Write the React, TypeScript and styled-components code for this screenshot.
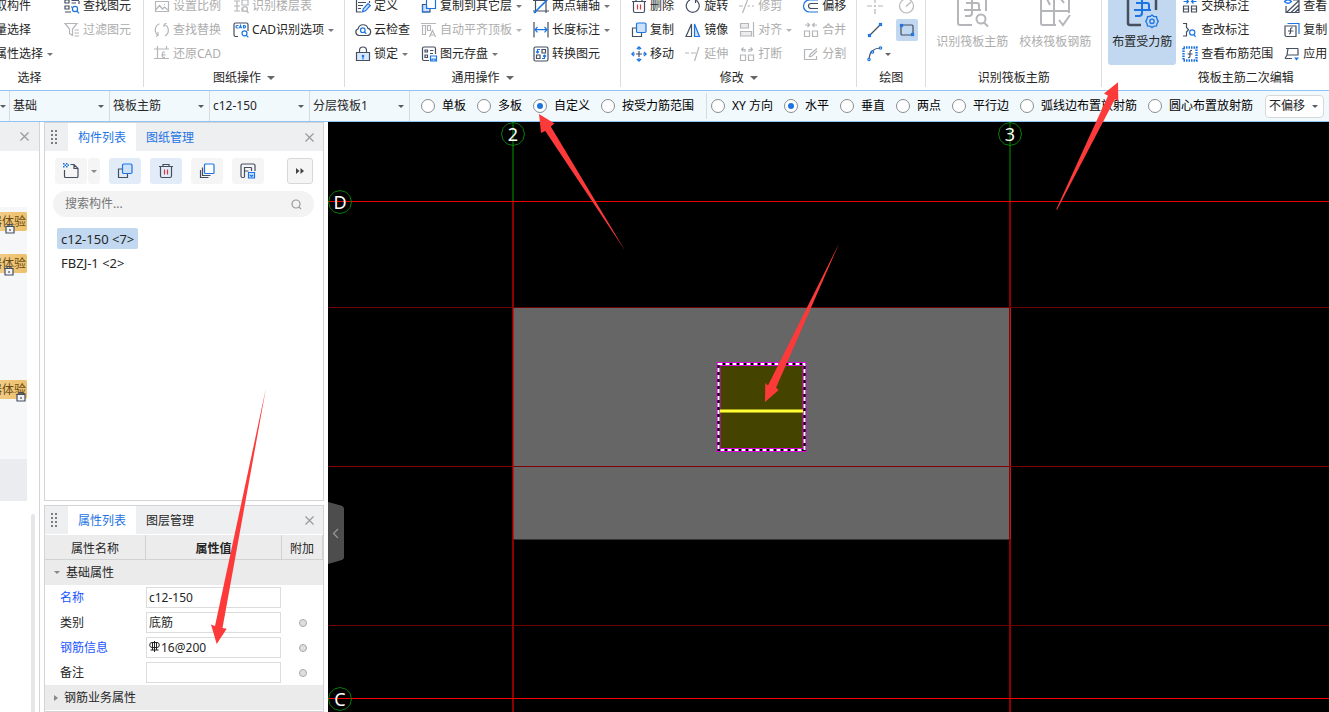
import React from "react";
import styled, { createGlobalStyle, css } from "styled-components";

const INK = "#454f60";
const BLUE = "#1c74e4";
const MUTED = "#b4b6ba";
const RED = "#d9363e";

const GlobalStyle = createGlobalStyle`
  *, *::before, *::after { box-sizing: border-box; }
  html, body, #root { height: 100%; margin: 0; }
  body, button, input, select {
    font-family: "Noto Sans", "Noto Sans CJK SC", sans-serif;
    font-size: 12px;
    line-height: 16px;
    color: #262626;
  }
  button, input, select { margin: 0; padding: 0; border: 0; background: none; }
`;

/* ---------- icons ---------- */

const Svg = styled.svg`
  flex: none;
  display: block;
  fill: none;
  stroke-width: 1.2;
  overflow: visible;
`;

const icons: Record<string, React.ReactNode> = {
  findElement: (
    <>
      <path stroke={INK} d="M1 2h4v3H1zM7.500 2.500H15M7.500 5H12M1 8h4v3H1zM7 9h1M15 6V3M1 14h6" />
      <g stroke={BLUE}><circle cx="11" cy="11" r="2.600" /><path d="M13 13l2 2.300" /></g>
    </>
  ),
  filter: <path stroke={MUTED} d="M1 1.500h12L8.500 7v6.500l-3-2V7zM10.500 8H15M10.500 11H15M10.500 14H15" />,
  scale: (
    <path stroke={MUTED} d="M1.500 3.500h13v10h-13zM2 11.500l3.500-4 3 3.500 2-2 3.500 3M10 6.500h1" />
  ),
  floorTable: (
    <>
      <path stroke={MUTED} d="M1 3h6M4 3v10M1 8h6M1 13h6M9 2h6v5H9zM9 14V9.500" />
      <circle stroke={MUTED} cx="12" cy="11" r="2.400" /><path stroke={MUTED} d="M13.800 13l1.700 2" />
    </>
  ),
  replace: (
    <path stroke={MUTED} d="M5.500 1.800A6.500 6.500 0 0 0 4 13.200L2 14.500M4 13.200V10M10 2.200A6.500 6.500 0 0 1 11 14M10 2.200l2.500-1M10 2.200V5" />
  ),
  cadOptions: (
    <>
      <path stroke={INK} d="M5 14.500H2.500a1.500 1.500 0 0 1-1.500-1.500V2.500A1.500 1.500 0 0 1 2.500 1h11A1.500 1.500 0 0 1 15 2.500V9" />
      <path stroke={BLUE} d="M5.500 3.500H4q-1 0-1 1.200T4 6h1.500M6.500 6.200l1-2.700 1 2.700M10.500 3.500V6h.8q1.200 0 1.200-1.200t-1.200-1.300z" />
      <circle stroke={BLUE} cx="11.500" cy="11.300" r="2.500" /><path stroke={BLUE} d="M13.300 13.200l2 2.200" />
    </>
  ),
  restoreCad: (
    <path stroke={MUTED} d="M0 3h15M3.500 0v12.500H15M12.500 0v3M11 6H9L8 9l1 2.500h2M7.500 8.800h4M0 12.500h3.500" />
  ),
  define: (
    <>
      <path stroke={INK} d="M1.500 1.500h11M3 4.500h8M3 7.500h5M3 10.500h3M1.500 1.500v12.500h5M14.500 3V5" />
      <path stroke={BLUE} fill="#cfe2fb" d="M7.500 13.800l.8-3L13 5.500l2.300 2-4.800 5.300z" />
    </>
  ),
  cloudCheck: (
    <>
      <path stroke={INK} d="M4 13.500a3.500 3.500 0 0 1-.8-6.800 5 5 0 0 1 9.700-.3A3.600 3.600 0 0 1 12 13.500z" />
      <g stroke={BLUE}><circle cx="7.800" cy="8.200" r="2.300" /><path d="M9.500 10l1.800 1.800" /></g>
    </>
  ),
  lock: (
    <>
      <path stroke={INK} d="M4.500 6V4.500a3.500 3.500 0 0 1 7 0V6" />
      <path stroke={INK} fill="#d9e8fc" d="M1.500 6.500h13v8h-13z" />
      <path stroke={BLUE} d="M8 10.500v3" /><circle fill={BLUE} cx="8" cy="10" r="1.300" />
    </>
  ),
  copyBlue: (
    <>
      <path stroke={INK} d="M5 6H1.500v8.500h9V11" />
      <rect stroke={BLUE} fill="#cfe1f8" x="5.500" y="1" width="9.500" height="9.500" rx="1.200" />
    </>
  ),
  copyFloor: (
    <>
      <path stroke={INK} fill="#cfe1f8" d="M5 6.500H1.500v7.500H9v-3" />
      <path stroke={BLUE} d="M5.500 1.500h9v9h-9zM1.500 7v7H9" />
    </>
  ),
  alignTop: (
    <path stroke={MUTED} d="M0 1.500h15M1.500 3.500h3v9h-3zM6.500 3.500h3v5h-3zM8.500 15l3-6.500 3 6.500M9.500 13h4" />
  ),
  saveElement: (
    <>
      <path stroke={INK} d="M8 14.500H3A1.500 1.500 0 0 1 1.500 13V2.500A1.500 1.500 0 0 1 3 1h10a1.500 1.500 0 0 1 1.500 1.500V8M4 4h2.500v2H4zM9 4.500h3.500M4 9h2.500v2.500H4zM9 7.500h3" />
      <path stroke={BLUE} d="M9.500 10h6v5h-6zM11 15v-2h3v2" />
    </>
  ),
  auxAxis: (
    <>
      <path stroke={INK} d="M2.500 0v15M0 2.500h14M0 13h16M13 0v15" /><path stroke={BLUE} d="M1 15L15 1" strokeWidth="1.600" />
    </>
  ),
  length: (
    <>
      <path stroke={INK} d="M1 0v15.500M15 0v15.500" />
      <path stroke={BLUE} d="M2 7.700h12M4.500 5L2 7.700l2.500 2.700M11.500 5L14 7.700l-2.500 2.700" />
    </>
  ),
  convert: (
    <>
      <rect stroke={INK} x="1" y="1" width="14" height="14" rx="1.500" />
      <path stroke={INK} d="M9 3.500h3.500V7H9zM3.500 9H7v3.500H3.500z" />
      <path stroke={BLUE} d="M7 3.500H4.500V7M3 5.500L4.500 7 6 5.500M9 12.500h2.500V9M10 10.500L11.500 9l1.500 1.500" />
    </>
  ),
  remove: (
    <>
      <path stroke={INK} d="M1 3.500h14M5 3.500v-2h6v2M2.500 3.500v9.500A1.500 1.500 0 0 0 4 14.500h8a1.500 1.500 0 0 0 1.500-1.500V3.500" />
      <path stroke={RED} d="M6.500 6.500v5M9.500 6.500v5" />
    </>
  ),
  rotate: <path stroke={INK} d="M5 2A6.500 6.500 0 1 0 10.500 2M10.500 2l3-.500M10.500 2v3" />,
  mirror: (
    <>
      <path stroke={INK} d="M6.500 2v12.500H1z" /><path stroke={BLUE} fill="#cfe1f8" d="M9.500 2v12.500h5z" />
    </>
  ),
  move: (
    <>
      <path stroke={INK} d="M8 5v6M5 8h6" />
      <path stroke={BLUE} d="M8 1v3M8 12v3M1 8h3M12 8h3M5.800 3L8 .8 10.200 3M5.800 13L8 15.200l2.200-2.200M3 5.800L.8 8 3 10.200M13 5.800L15.200 8 13 10.200" />
    </>
  ),
  trim: <path stroke={MUTED} d="M0 8h4M3.500 15l5-13M8.500 8h2.500M13 8h2" />,
  align: <path stroke={MUTED} fill="#ececee" d="M1.500 1.500h8v4.500h-8zM1.500 9.500h11v4.500h-11zM14.500 0v15" />,
  extend: <path stroke={MUTED} d="M0 7h4M6 7h5M9.500 15L14 1" />,
  breakIcon: (
    <path stroke={MUTED} d="M1.500 9h5v5.500h-5zM9.500 9h5v5.500h-5zM6 6V3.500H2.500M4.500 1.500l-2 2 2 2M10 6V3.500h3.500M11.500 1.500l2 2-2 2" />
  ),
  merge: (
    <path stroke={MUTED} d="M1.500 9h5v5.500h-5zM9.500 9h5v5.500h-5zM2 3h4M4.500 1l2 2-2 2M14 3h-4M11.500 1l-2 2 2 2" />
  ),
  split: <path stroke={MUTED} d="M9 3.500H1.500v10h12V10M6 11l1.500-3L14 2.500M6 11l3-1 5-5" />,
  offset: (
    <>
      <path stroke={BLUE} d="M15 2H6.500a6 6 0 0 0 0 12H15" /><path stroke={INK} d="M15 5.500H8a2.500 2.500 0 0 0 0 5h7" />
    </>
  ),
  point: <path stroke={MUTED} d="M8 0v5M8 11v5M0 8h5M11 8h5M7 8h2M8 7v2" />,
  circle: (
    <>
      <circle stroke={MUTED} cx="7.500" cy="8" r="7" /><path stroke={MUTED} d="M7 8.500L12 4" />
    </>
  ),
  line: (
    <>
      <path stroke={INK} d="M3.500 12.500L12.500 3.500" />
      <g stroke={BLUE}><rect x="1.500" y="12.500" width="2" height="2" /><rect x="12.500" y="1.500" width="2" height="2" /></g>
    </>
  ),
  rect: (
    <>
      <rect stroke={INK} x="2" y="3" width="12" height="10" rx="1" />
      <g stroke={BLUE} fill="#c1d8f0"><rect x="1.500" y="2.500" width="2" height="2" /><rect x="12.500" y="11.500" width="2" height="2" /></g>
    </>
  ),
  arc: (
    <>
      <path stroke={INK} d="M2 12.500Q3 2.500 13 2" />
      <g stroke={BLUE}><circle cx="2" cy="13.500" r="1.200" /><circle cx="5.500" cy="6" r="1.200" fill="#fff" /><circle cx="13.500" cy="2" r="1.200" /></g>
    </>
  ),
  swapMark: (
    <>
      <path stroke={BLUE} d="M1.500 3.500h5M4.500 1.500l2 2-2 2M14.500 3.500h-5M11.500 1.500l-2 2 2 2" />
      <path stroke={INK} d="M1.500 8h5v6h-5zM1.500 11h5M9.500 8h5v6h-5zM9.500 11h5" />
    </>
  ),
  editMark: (
    <>
      <path stroke={INK} d="M1 1.500h3.500v4l2 2.200-2 2.300v4H1" />
      <g stroke={BLUE}><circle cx="10.200" cy="10.500" r="2.600" /><path d="M12 12.500l1.500 2.500" /></g>
    </>
  ),
  range: (
    <>
      <rect stroke={BLUE} strokeWidth="2.400" strokeDasharray="1.500 1" x="1.500" y="1.500" width="13" height="13" />
      <path stroke={INK} d="M10 4.500Q8 4 8 6v4q0 2-2 1.500M5.500 8h5" />
    </>
  ),
  viewHatch: (
    <>
      <path stroke={INK} d="M2 8v6.500h13V2H9M3 14l11.500-11M7 14.500l8-7.500M11 14.500l4-4" />
      <path stroke={BLUE} d="M.500 3.500Q4 0 7.500 3.500 4 7 .500 3.500z" />
    </>
  ),
  copyRebar: (
    <>
      <path stroke={INK} d="M1 4h11v10.500H2.500A1.500 1.500 0 0 1 1 13z" /><path stroke={BLUE} d="M3.500 1.500H15v10.500" />
      <path stroke={INK} d="M8.500 6Q6.500 5.500 6.500 7.500v3q0 1.500-1.500 1.500M4 9h5.500" />
    </>
  ),
  applyName: (
    <>
      <path stroke={INK} d="M2 2.500h12M4 2.500L3 9M1 12.500L3 9h11V2.500M1 12.500h7" />
      <path fill={BLUE} d="M10 11.500h5l-2.500 3z" />
    </>
  ),
  newItem: (
    <>
      <path stroke={INK} d="M7.500 1.500H11L15 5.500v8a1 1 0 0 1-1 1H2.500a1 1 0 0 1-1-1V7M11 1.500v4h4" />
      <path fill={BLUE} d="M0 0h1.500v1.500H0zM3 0h1.500v1.500H3zM1.500 1.500H3V3H1.500zM4.500 1.500H6V3H4.500zM0 3h1.500v1.500H0zM3 3h1.500v1.500H3z" />
    </>
  ),
  layers: (
    <>
      <path stroke={INK} d="M3.500 4.500v8h8M1.500 7v7.500h8" />
      <rect stroke={BLUE} fill="#fff" x="5.500" y="1" width="9.500" height="9.500" rx="1" />
    </>
  ),
  saveList: (
    <>
      <path stroke={INK} d="M4 14.500H2.500A1.500 1.500 0 0 1 1 13V2.500A1.500 1.500 0 0 1 2.500 1h11A1.500 1.500 0 0 1 15 2.500V8M4.500 4.500h7M4.500 4v10.500M4.500 8h4M11.500 4.500V8" />
      <path stroke={BLUE} fill="#cfe1f8" d="M8.500 9.500h6v5.500h-6zM10 12l1.500 1.500L13 12" />
    </>
  ),
};

const Icon = ({ name }: { name: string }) => (
  <Svg width="16" height="16" viewBox="0 0 16 16" aria-hidden="true">{icons[name]}</Svg>
);

const rebarGlyph = "M10 8h11q2 0 2 2v5M8 15h17M16 2v16q0 3-3 3H9";

const BigIcon = ({ kind }: { kind: "identify" | "verify" | "arrange" }) => (
  <Svg width="32" height="32" viewBox="0 0 32 32" aria-hidden="true">
    {kind === "identify" && (
      <g stroke={MUTED} strokeWidth="2">
        <path d="M30 16V0M16 30H4a2 2 0 0 1-2-2V0" /><path d={rebarGlyph} />
        <circle cx="25" cy="24" r="4.500" /><path d="M28 27.500l4 4" />
      </g>
    )}
    {kind === "verify" && (
      <g stroke={MUTED} strokeWidth="2">
        <path d="M17 30H4a2 2 0 0 1-2-2V0M30 18V0M2 16h28M15 0v30M6 0l5 10M19 0l6 8" />
        <path d="M20 25l4 5 7-10" />
      </g>
    )}
    {kind === "arrange" && (
      <g strokeWidth="2">
        <path stroke={INK} d="M30 15V0M15 30H4a2 2 0 0 1-2-2V0" strokeWidth="2.500" /><path stroke={BLUE} d={rebarGlyph} />
        <path stroke={BLUE} strokeWidth="1.300" d="M26 20l2 1.500 2.500.200.500 2.500 1.300 2.100-1.300 2.100-.500 2.500-2.500.200-2 1.500-2-1.500-2.500-.200-.500-2.500-1.300-2.100 1.300-2.100.500-2.500 2.500-.200z" />
        <circle stroke={BLUE} strokeWidth="1.300" cx="26" cy="26.300" r="2.200" />
      </g>
    )}
  </Svg>
);

const Caret = styled.i<{ $size?: number; $color?: string; $side?: boolean }>`
  flex: none;
  border: ${({ $size = 3 }) => $size}px solid transparent;
  ${({ $size = 3, $color = "#666", $side }) =>
    $side
      ? css`border-left: ${$size + 1}px solid ${$color}; border-right: 0;`
      : css`border-top: ${$size}px solid ${$color}; border-bottom: 0;`}
`;

/* ---------- shell ---------- */

const Shell = styled.div`
  position: relative;
  display: flex;
  flex-direction: column;
  height: 100vh;
  overflow: hidden;
  background: #fff;
`;

const Workspace = styled.main`
  display: flex;
  flex: 1;
  min-height: 0;
`;

/* ---------- ribbon ---------- */

const Ribbon = styled.header`
  display: flex;
  align-items: flex-end;
  flex: none;
  height: 91px;
  padding-bottom: 3px;
  overflow: hidden;
  border-bottom: 1px solid #90c4f6;
`;

const RibbonGroup = styled.section<{ $bleed?: boolean; $minWidth?: number }>`
  flex: none;
  min-width: ${({ $minWidth = 0 }) => $minWidth}px;
  margin-left: ${({ $bleed }) => ($bleed ? -84 : 0)}px;
  border-right: 1px solid #dcdcdc;
`;

const GroupBody = styled.div<{ $gap?: number; $left?: number; $right?: number }>`
  display: flex;
  align-items: flex-start;
  height: 72px;
  gap: ${({ $gap = 11 }) => $gap}px;
  padding: 0 ${({ $right = 10 }) => $right}px 0 ${({ $left = 10 }) => $left}px;
`;

const GroupTitle = styled.h2`
  display: flex;
  align-items: center;
  justify-content: center;
  gap: 6px;
  height: 21px;
  margin: 0;
  padding-top: 2px;
  font-size: 12px;
  font-weight: 400;
`;

const ToolColumn = styled.div`
  display: flex;
  flex-direction: column;
`;

const ToolColumns = styled.div`
  display: flex;
  gap: 11px;
`;

const ToolButton = styled.button`
  display: flex;
  align-items: center;
  gap: 3px;
  height: 24px;
  white-space: nowrap;
  > ${Caret} { margin-left: 1px; }
  &:disabled { color: #adadad; }
`;

const DrawButton = styled.button<{ $active?: boolean }>`
  display: flex;
  align-items: center;
  gap: 2px;
  height: 22px;
  margin: 1px 0;
  padding: 0 3px;
  border-radius: 2px;
  background: ${({ $active }) => ($active ? "#c1d8f0" : "none")};
`;

const BigButton = styled.button<{ $active?: boolean }>`
  display: flex;
  flex-direction: column;
  align-items: center;
  justify-content: flex-end;
  gap: 7px;
  height: 71px;
  padding: 0 ${({ $active }) => ($active ? 4 : 0)}px 15px;
  border-radius: 3px;
  background: ${({ $active }) => ($active ? "#c1d8f0" : "none")};
  &:disabled { color: #adadad; }
`;

type ToolSpec = { label: string; icon?: string; menu?: boolean; off?: boolean };

const Tools = ({ items }: { items: ToolSpec[] }) => (
  <ToolColumn>
    {items.map(({ label, icon, menu, off }) => (
      <ToolButton key={label} disabled={off}>
        {icon && <Icon name={icon} />}
        {label}
        {menu && <Caret $color={off ? "#b5b5b5" : "#777"} />}
      </ToolButton>
    ))}
  </ToolColumn>
);

/* ---------- option bar ---------- */

const OptionBar = styled.div`
  display: flex;
  align-items: center;
  flex: none;
  height: 31px;
  overflow: hidden;
  background: #f2f9fd;
  border-bottom: 1px solid #90c4f6;
  white-space: nowrap;
`;

const SelectCell = styled.span<{ $width: number; $boxed?: boolean }>`
  display: grid;
  align-items: center;
  flex: none;
  width: ${({ $width }) => $width}px;
  height: ${({ $boxed }) => ($boxed ? "23px" : "100%")};
  ${({ $boxed }) =>
    $boxed
      ? css`margin-left: 12px; border: 1px solid #d5d9dc; border-radius: 4px; background: #fff;`
      : css`border-right: 1px solid #d6dbdf;`}
  > * { grid-area: 1 / 1; }
  > ${Caret} { justify-self: end; margin-right: 5px; pointer-events: none; }
`;

const Select = styled.select`
  appearance: none;
  width: 100%;
  min-width: 0;
  height: 20px;
  padding-left: 3px;
  outline: none;
`;

const RadioRow = styled.div<{ $left: number; $divided?: boolean }>`
  display: flex;
  align-items: center;
  flex: none;
  gap: 11px;
  height: 26px;
  padding-left: ${({ $left }) => $left}px;
  ${({ $divided }) => $divided && css`padding-right: 12px; border-right: 1px solid #d6dbdf;`}
`;

const RadioLabel = styled.label`
  display: flex;
  align-items: center;
  gap: 7px;
  color: #000;
`;

const Radio = styled.input`
  appearance: none;
  display: grid;
  place-items: center;
  width: 14px;
  height: 14px;
  border: 1px solid #888d92;
  border-radius: 50%;
  background: #fff;
  &:checked::before {
    content: "";
    width: 6px;
    height: 6px;
    border-radius: 50%;
    background: #1c74e4;
  }
`;

const Dropdown = ({ name, value, width, boxed }: { name: string; value: string; width: number; boxed?: boolean }) => (
  <SelectCell $width={width} $boxed={boxed}>
    <Select aria-label={name}><option>{value}</option></Select>
    <Caret $color="#555b63" />
  </SelectCell>
);

const Radios = ({ name, options, initial, left, divided }: {
  name: string; options: string[]; initial: string; left: number; divided?: boolean;
}) => (
  <RadioRow role="radiogroup" $left={left} $divided={divided}>
    {options.map((o) => (
      <RadioLabel key={o}>
        <Radio type="radio" name={name} defaultChecked={o === initial} />
        {o}
      </RadioLabel>
    ))}
  </RadioRow>
);

/* ---------- module strip on the left ---------- */

const Strip = styled.aside`
  flex: none;
  display: flex;
  flex-direction: column;
  width: 40px;
  border-right: 1px solid #d4d4d6;
`;

const StripHead = styled.div`
  display: flex;
  align-items: center;
  justify-content: flex-end;
  flex: none;
  height: 29px;
  padding-right: 10px;
  background: #eeeff1;
`;

const StripList = styled.div`
  width: 27px;
  height: 252px;
  margin-top: 56px;
  padding-top: 5px;
  background: #f6f7f9;
`;

const StripFooter = styled.div`
  width: 27px;
  height: 42px;
  background: #ebecf0;
`;

const StripScroll = styled.div`
  flex: 1;
  align-self: flex-end;
  width: 4px;
  margin: 13px 4px 0 0;
  border-radius: 2px 2px 0 0;
  background: #e6e6e6;
`;

const TrialBadge = styled.div<{ $after: number }>`
  position: relative;
  display: flex;
  align-items: center;
  justify-content: flex-end;
  height: 19px;
  margin-bottom: ${({ $after }) => $after}px;
  padding: 1px 1px 0 0;
  border-radius: 0 2px 2px 0;
  background: linear-gradient(90deg, #f0cb85, #edc069);
  color: #6b4b17;
  white-space: nowrap;
`;

const BadgeLock = styled.span<{ $left: number }>`
  position: absolute;
  left: ${({ $left }) => $left}px;
  bottom: -3px;
`;

const LockGlyph = () => (
  <Svg width="10" height="11" viewBox="0 0 10 11" aria-hidden="true">
    <path stroke={INK} d="M3 3.500V1.500h4v2" />
    <path stroke={INK} fill="#f3f4f8" d="M1 3.500h8V10H1z" />
    <path stroke={INK} d="M5 6v2" />
  </Svg>
);

/* ---------- docked panels ---------- */

const Dock = styled.div`
  flex: none;
  display: flex;
  flex-direction: column;
  gap: 4px;
  width: 280px;
  margin: 0 4px;
`;

const Panel = styled.section<{ $grow?: boolean }>`
  flex: ${({ $grow }) => ($grow ? "1 1 0" : "none")};
  min-height: 0;
  padding-bottom: 1px;
  border: 1px solid #d4d4d6;
  background: #fff;
`;

const TabBar = styled.div`
  display: flex;
  height: 29px;
  border-bottom: 1px solid #fff;
  background: #eeeff1;
`;

const Grip = styled.div`
  display: grid;
  place-items: center;
  width: 23px;
  padding-right: 5px;
`;

const Tab = styled.button<{ $active?: boolean; $dark?: boolean }>`
  padding: 2px 10px 0;
  background: ${({ $active }) => ($active ? "#fff" : "none")};
  color: ${({ $dark }) => ($dark ? "#262626" : "#1c74e4")};
`;

const CloseButton = styled.button`
  display: grid;
  place-items: center;
  width: 10px;
  margin: 0 9px 0 auto;
`;

const CloseGlyph = () => (
  <Svg width="9" height="9" viewBox="0 0 9 9" aria-hidden="true">
    <path stroke="#9a9a9a" d="M.500.500l8 8M8.500.500l-8 8" />
  </Svg>
);

const GripGlyph = () => (
  <Svg width="6" height="14" viewBox="0 0 6 14" aria-hidden="true">
    {[0, 4, 8, 12].map((y) => (
      <path key={y} fill="#7d7d7d" d={`M0 ${y}h2v2H0zM4 ${y}h2v2H4z`} />
    ))}
  </Svg>
);

const PanelTabs = ({ first, second, darkSecond }: { first: string; second: string; darkSecond?: boolean }) => (
  <TabBar role="tablist">
    <Grip><GripGlyph /></Grip>
    <Tab role="tab" $active>{first}</Tab>
    <Tab role="tab" $dark={darkSecond}>{second}</Tab>
    <CloseButton aria-label="关闭"><CloseGlyph /></CloseButton>
  </TabBar>
);

const ListToolbar = styled.div`
  display: flex;
  gap: 9px;
  padding: 6px 10px 0;
`;

const SplitButton = styled.div`
  display: flex;
  gap: 1px;
`;

const SquareButton = styled.button<{ $tone?: "blue" | "outline"; $narrow?: boolean }>`
  display: grid;
  place-items: center;
  width: ${({ $narrow, $tone }) => ($narrow ? 12 : $tone === "outline" ? 26 : 32)}px;
  height: 26px;
  border-radius: 3px;
  background: ${({ $tone }) => ($tone === "blue" ? "#e2ecf9" : "#f5f5f6")};
  ${({ $tone }) => $tone === "outline" && css`margin-left: auto; border: 1px solid #d8d8da;`}
`;

const SearchBox = styled.label`
  display: flex;
  align-items: center;
  height: 26px;
  margin: 7px 9px 0 8px;
  padding: 0 12px;
  border-radius: 13px;
  background: #f3f3f4;
`;

const SearchInput = styled.input`
  flex: 1;
  min-width: 0;
  outline: none;
  &::placeholder { color: #757575; }
`;

const ItemList = styled.ul`
  display: flex;
  flex-direction: column;
  align-items: flex-start;
  gap: 3px;
  margin: 11px 12px 0;
  padding: 0;
  list-style: none;
`;

const ItemButton = styled.button<{ $selected?: boolean }>`
  display: block;
  height: 21px;
  padding: 0 4px;
  border-radius: 2px;
  background: ${({ $selected }) => ($selected ? "#c1d8f0" : "none")};
  font-size: 13px;
`;

/* ---------- property table ---------- */

const PropertyTable = styled.table`
  width: 100%;
  table-layout: fixed;
  border-collapse: separate;
  border-spacing: 0;
  th, td { height: 25px; padding: 0; font-weight: 400; }
`;

const HeadCell = styled.th<{ $width?: number; $strong?: boolean }>`
  width: ${({ $width }) => ($width ? `${$width}px` : "auto")};
  border-right: 1px solid #d2d2d2;
  border-bottom: 1px solid #d2d2d2;
  background: #ececec;
  && {
    padding-top: 3px;
    font-weight: ${({ $strong }) => ($strong ? 700 : 400)};
  }
`;

const SectionCell = styled.th`
  background: #ebebeb;
  text-align: left;
`;

const SectionButton = styled.button`
  display: flex;
  align-items: center;
  gap: 6px;
  padding-left: 9px;
`;

const NameCell = styled.th<{ $link?: boolean }>`
  && { padding-left: 15px; }
  text-align: left;
  color: ${({ $link }) => ($link ? "#1a56ff" : "#262626")};
`;

const ValueField = styled.span`
  display: flex;
  align-items: center;
  gap: 1px;
  height: 21px;
  margin-right: 1px;
  padding-left: 2px;
  border: 1px solid #dcdcdc;
`;

const ValueInput = styled.input`
  flex: 1;
  min-width: 0;
  outline: none;
`;

const ExtraToggle = styled.input`
  appearance: none;
  display: block;
  width: 8px;
  height: 8px;
  margin: 0 auto;
  border: 1px solid #aaa;
  border-radius: 50%;
  background: #dedee2;
`;

const RebarGrade = () => (
  <Svg width="11" height="14" viewBox="0 0 11 14" aria-hidden="true">
    <path stroke="#222" strokeWidth="1" d="M5.500 0v11M3 1.500h5a2 2.200 0 0 1 0 5H3a2 2.200 0 0 1 0-5M1.500 9h8M3.500 1.500v7.500M7.500 1.500v7.500" />
  </Svg>
);

const properties = [
  { name: "名称", value: "c12-150", link: true, extra: false },
  { name: "类别", value: "底筋", link: false, extra: true },
  { name: "钢筋信息", value: "16@200", link: true, extra: true, grade: true },
  { name: "备注", value: "", link: false, extra: true },
];

/* ---------- drawing canvas ---------- */

const Canvas = styled.div`
  position: relative;
  flex: 1;
  min-width: 0;
  background: #000;
`;

const Drawing = styled.svg`
  display: block;
  width: 100%;
  height: 100%;
`;

const AxisLabel = styled.text`
  fill: #fff;
  font-family: "Noto Sans", sans-serif;
  font-size: 18px;
  text-anchor: middle;
`;

const CollapseButton = styled.button`
  position: absolute;
  left: 0;
  top: 380px;
`;

const AxisBubble = ({ x, y, label }: { x: number; y: number; label: string }) => {
  const points = Array.from({ length: 12 }, (_, i) => {
    const a = (i * Math.PI) / 6;
    return `${x + 11.5 * Math.cos(a)},${y + 11.5 * Math.sin(a)}`;
  }).join(" ");
  return (
    <>
      <polygon points={points} fill="none" stroke="#0a7d0a" />
      <AxisLabel x={x} y={y + 7}>{label}</AxisLabel>
    </>
  );
};

const Plan = () => (
  <Drawing>
    <rect x="185" y="186" width="497" height="231" fill="#666" />
    <path d="M185 417.500h497" stroke="#333" />
    <g fill="#004d00"><rect x="184" y="0" width="2" height="79" /><rect x="681" y="0" width="2" height="79" /></g>
    <g fill="#8b0000"><rect x="184" y="79" width="2" height="100%" /><rect x="681" y="79" width="2" height="100%" /></g>
    <g fill="#b02020"><rect x="185" y="186" width="1" height="231" /><rect x="682" y="186" width="1" height="231" /></g>
    <rect x="0" y="79" width="100%" height="1" fill="#f00000" />
    <rect x="0" y="185" width="100%" height="1" fill="#700000" />
    <rect x="0" y="344" width="100%" height="1" fill="#800000" />
    <rect x="0" y="503" width="100%" height="1" fill="#700000" />
    <rect x="0" y="576" width="100%" height="1" fill="#ff0000" />
    <rect x="390.500" y="242" width="86" height="86" fill="#444400" stroke="#e000e0" strokeWidth="4" />
    <rect x="390.500" y="242" width="86" height="86" fill="none" stroke="#000" strokeWidth="2" />
    <rect x="390.500" y="242" width="86" height="86" fill="none" stroke="#fff" strokeWidth="2" strokeDasharray="4 3" />
    <rect x="392" y="287" width="83" height="4" fill="#a8a81a" />
    <rect x="392" y="288" width="83" height="2" fill="#ffff33" />
    <AxisBubble x={185} y={12} label="2" />
    <AxisBubble x={682} y={12} label="3" />
    <AxisBubble x={12} y={80} label="D" />
    <AxisBubble x={12} y={577} label="C" />
  </Drawing>
);

/* Red pointers drawn above the whole window. */
const Pointers = styled.svg`
  position: absolute;
  inset: 0;
  width: 100%;
  height: 100%;
  fill: #fd3a3a;
  pointer-events: none;
`;

export default function App() {
  return (
    <>
      <GlobalStyle />
      <Shell>
        <Ribbon>
          <RibbonGroup $bleed>
            <GroupBody $left={67} $right={12}>
              <Tools items={[{ label: "拾取构件" }, { label: "批量选择" }, { label: "按属性选择", menu: true }]} />
              <Tools items={[{ label: "查找图元", icon: "findElement" }, { label: "过滤图元", icon: "filter", off: true }]} />
            </GroupBody>
            <GroupTitle>选择</GroupTitle>
          </RibbonGroup>

          <RibbonGroup>
            <GroupBody $gap={12}>
              <Tools items={[
                { label: "设置比例", icon: "scale", off: true },
                { label: "查找替换", icon: "replace", off: true },
                { label: "还原CAD", icon: "restoreCad", off: true },
              ]} />
              <Tools items={[
                { label: "识别楼层表", icon: "floorTable", off: true },
                { label: "CAD识别选项", icon: "cadOptions", menu: true },
              ]} />
            </GroupBody>
            <GroupTitle>图纸操作<Caret $size={4} /></GroupTitle>
          </RibbonGroup>

          <RibbonGroup>
            <GroupBody>
              <Tools items={[
                { label: "定义", icon: "define" },
                { label: "云检查", icon: "cloudCheck" },
                { label: "锁定", icon: "lock", menu: true },
              ]} />
              <Tools items={[
                { label: "复制到其它层", icon: "copyFloor", menu: true },
                { label: "自动平齐顶板", icon: "alignTop", menu: true, off: true },
                { label: "图元存盘", icon: "saveElement", menu: true },
              ]} />
              <Tools items={[
                { label: "两点辅轴", icon: "auxAxis", menu: true },
                { label: "长度标注", icon: "length", menu: true },
                { label: "转换图元", icon: "convert" },
              ]} />
            </GroupBody>
            <GroupTitle>通用操作<Caret $size={4} /></GroupTitle>
          </RibbonGroup>

          <RibbonGroup>
            <GroupBody>
              <Tools items={[
                { label: "删除", icon: "remove" },
                { label: "复制", icon: "copyBlue" },
                { label: "移动", icon: "move" },
              ]} />
              <Tools items={[
                { label: "旋转", icon: "rotate" },
                { label: "镜像", icon: "mirror" },
                { label: "延伸", icon: "extend", off: true },
              ]} />
              <Tools items={[
                { label: "修剪", icon: "trim", off: true },
                { label: "对齐", icon: "align", off: true, menu: true },
                { label: "打断", icon: "breakIcon", off: true },
              ]} />
              <Tools items={[
                { label: "偏移", icon: "offset" },
                { label: "合并", icon: "merge", off: true },
                { label: "分割", icon: "split", off: true },
              ]} />
            </GroupBody>
            <GroupTitle>修改<Caret $size={4} /></GroupTitle>
          </RibbonGroup>

          <RibbonGroup>
            <GroupBody $gap={2} $left={7} $right={7}>
              <ToolColumn>
                <DrawButton aria-label="点"><Icon name="point" /></DrawButton>
                <DrawButton aria-label="直线"><Icon name="line" /></DrawButton>
                <DrawButton aria-label="弧线"><Icon name="arc" /><Caret /></DrawButton>
              </ToolColumn>
              <ToolColumn>
                <DrawButton aria-label="圆"><Icon name="circle" /></DrawButton>
                <DrawButton aria-label="矩形" $active><Icon name="rect" /></DrawButton>
              </ToolColumn>
            </GroupBody>
            <GroupTitle>绘图</GroupTitle>
          </RibbonGroup>

          <RibbonGroup>
            <GroupBody>
              <BigButton disabled><BigIcon kind="identify" />识别筏板主筋</BigButton>
              <BigButton disabled><BigIcon kind="verify" />校核筏板钢筋</BigButton>
            </GroupBody>
            <GroupTitle>识别筏板主筋</GroupTitle>
          </RibbonGroup>

          <RibbonGroup $minWidth={288}>
            <GroupBody $gap={6} $left={6}>
              <BigButton $active><BigIcon kind="arrange" />布置受力筋</BigButton>
              <ToolColumns>
                <Tools items={[
                  { label: "交换标注", icon: "swapMark" },
                  { label: "查改标注", icon: "editMark" },
                  { label: "查看布筋范围", icon: "range" },
                ]} />
                <Tools items={[
                  { label: "查看", icon: "viewHatch" },
                  { label: "复制", icon: "copyRebar" },
                  { label: "应用", icon: "applyName" },
                ]} />
              </ToolColumns>
            </GroupBody>
            <GroupTitle>筏板主筋二次编辑</GroupTitle>
          </RibbonGroup>
        </Ribbon>

        <OptionBar>
          <Dropdown name="楼层" value="" width={10} />
          <Dropdown name="构件类别" value="基础" width={100} />
          <Dropdown name="构件类型" value="筏板主筋" width={100} />
          <Dropdown name="构件" value="c12-150" width={100} />
          <Dropdown name="分层" value="分层筏板1" width={100} />
          <Radios name="scope" left={11} divided initial="自定义" options={["单板", "多板", "自定义", "按受力筋范围"]} />
          <Radios
            name="direction"
            left={4}
            initial="水平"
            options={["XY 方向", "水平", "垂直", "两点", "平行边", "弧线边布置放射筋", "圆心布置放射筋"]}
          />
          <Dropdown name="偏移" value="不偏移" width={59} boxed />
        </OptionBar>

        <Workspace>
          <Strip>
            <StripHead><button aria-label="关闭"><CloseGlyph /></button></StripHead>
            <StripList>
              <TrialBadge $after={23}>器体验<BadgeLock $left={5}><LockGlyph /></BadgeLock></TrialBadge>
              <TrialBadge $after={107}>器体验<BadgeLock $left={4}><LockGlyph /></BadgeLock></TrialBadge>
              <TrialBadge $after={0}>器体验<BadgeLock $left={16}><LockGlyph /></BadgeLock></TrialBadge>
            </StripList>
            <StripFooter />
            <StripScroll />
          </Strip>

          <Dock>
            <Panel $grow>
              <PanelTabs first="构件列表" second="图纸管理" />
              <ListToolbar>
                <SplitButton>
                  <SquareButton aria-label="新建"><Icon name="newItem" /></SquareButton>
                  <SquareButton aria-label="新建选项" $narrow><Caret $color="#888" /></SquareButton>
                </SplitButton>
                <SquareButton aria-label="复制" $tone="blue"><Icon name="copyBlue" /></SquareButton>
                <SquareButton aria-label="删除" $tone="blue"><Icon name="remove" /></SquareButton>
                <SquareButton aria-label="层间复制"><Icon name="layers" /></SquareButton>
                <SquareButton aria-label="存盘"><Icon name="saveList" /></SquareButton>
                <SquareButton aria-label="更多" $tone="outline">
                  <Svg width="8" height="6" viewBox="0 0 8 6" aria-hidden="true">
                    <path fill="#444" d="M0 0l3.500 3L0 6zM4.500 0L8 3 4.500 6z" />
                  </Svg>
                </SquareButton>
              </ListToolbar>
              <SearchBox>
                <SearchInput aria-label="搜索构件" placeholder="搜索构件..." />
                <Svg width="11" height="11" viewBox="0 0 11 11" aria-hidden="true">
                  <g stroke="#9a9a9a"><circle cx="5" cy="5" r="4" /><path d="M7.800 7.800L10 10" /></g>
                </Svg>
              </SearchBox>
              <ItemList>
                <li><ItemButton $selected>c12-150 &lt;7&gt;</ItemButton></li>
                <li><ItemButton>FBZJ-1 &lt;2&gt;</ItemButton></li>
              </ItemList>
            </Panel>

            <Panel>
              <PanelTabs first="属性列表" second="图层管理" darkSecond />
              <PropertyTable>
                <thead>
                  <tr>
                    <HeadCell $width={101}>属性名称</HeadCell>
                    <HeadCell $strong>属性值</HeadCell>
                    <HeadCell $width={41}>附加</HeadCell>
                  </tr>
                </thead>
                <tbody>
                  <tr>
                    <SectionCell colSpan={3}>
                      <SectionButton><Caret $color="#888" />基础属性</SectionButton>
                    </SectionCell>
                  </tr>
                  {properties.map((p) => (
                    <tr key={p.name}>
                      <NameCell scope="row" $link={p.link}>{p.name}</NameCell>
                      <td>
                        <ValueField>
                          {p.grade && <RebarGrade />}
                          <ValueInput aria-label={p.name} defaultValue={p.value} />
                        </ValueField>
                      </td>
                      <td>{p.extra && <ExtraToggle type="checkbox" aria-label={`${p.name} 附加`} />}</td>
                    </tr>
                  ))}
                  <tr>
                    <SectionCell colSpan={3}>
                      <SectionButton><Caret $color="#888" $side />钢筋业务属性</SectionButton>
                    </SectionCell>
                  </tr>
                </tbody>
              </PropertyTable>
            </Panel>
          </Dock>

          <Canvas>
            <Plan />
            <CollapseButton aria-label="收起面板">
              <Svg width="16" height="62" viewBox="0 0 16 62" aria-hidden="true">
                <path fill="#4d4d4d" d="M0 0l13 3.500q3 1 3 3.500v48q0 2.500-3 3.300L0 62z" />
                <path stroke="#999" d="M10 27l-4.500 4.500L10 36" />
              </Svg>
            </CollapseButton>
          </Canvas>
        </Workspace>

        <Pointers aria-hidden="true">
          <path d="M539 114l15.500 9.500-3.700 3L625 250.500 545.300 131l-4.300 2z" />
          <path d="M839.300 243L768 385.500l-2.700-2.500L765 402l13.700-12-2.700-2.300z" />
          <path d="M1118 82.300L1104 93.500l4 2.200-51.800 113.800 1 0L1115 99l3.300 2.300z" />
          <path d="M266 388l-51 238-4-1.500 5.700 19.500 10-15.300-4.200-.700z" />
        </Pointers>
      </Shell>
    </>
  );
}
